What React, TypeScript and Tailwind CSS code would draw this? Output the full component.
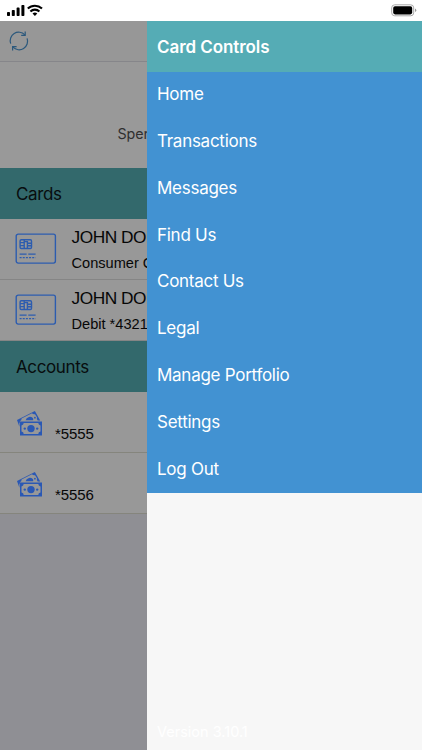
import React from 'react';

const menuItems = [
  'Home',
  'Transactions',
  'Messages',
  'Find Us',
  'Contact Us',
  'Legal',
  'Manage Portfolio',
  'Settings',
  'Log Out',
];

function StatusBar() {
  return (
    <header className="flex h-[21px] shrink-0 items-start justify-between bg-white pl-[7px] pr-[5px] pt-1">
      <div className="flex gap-[2px]">
        <svg width="18" height="12" viewBox="0 0 18 12">
          <rect x="0" y="8" width="3" height="4" rx="0.8" />
          <rect x="4.8" y="6" width="3" height="6" rx="0.8" />
          <rect x="9.6" y="3.6" width="3" height="8.4" rx="0.8" />
          <rect x="14.4" y="1" width="3" height="11" rx="0.8" />
        </svg>
        <svg width="16" height="12" viewBox="0 0 16 12" fill="none" stroke="#000" strokeWidth="2.1">
          <path d="M.8 4.6a10.3 10.3 0 0 1 14.2 0M3.4 7.4a6.5 6.5 0 0 1 9 0" />
          <path d="M5.5 9.6a3.6 3.6 0 0 1 4.8 0L7.9 12z" fill="#000" stroke="none" />
        </svg>
      </div>
      <svg width="26" height="13" viewBox="0 0 26 13">
        <rect x="0.7" y="0.8" width="22" height="11" rx="3" fill="#fff" stroke="#aaa" />
        <rect x="2.2" y="2.2" width="19" height="8.2" rx="1.8" />
        <path d="M24 4.6q1.3.5 1.3 1.7T24 8z" fill="#999" />
      </svg>
    </header>
  );
}

function RefreshIcon() {
  return (
    <svg width="20" height="20" viewBox="0 0 20 20" fill="none" stroke="#2b587c" strokeWidth="1.2">
      <path d="M1.7 12.6A8.5 8.5 0 0 1 15.8 3.8M18.1 7.4A8.5 8.5 0 0 1 4 16.2" />
      <path d="M16.2.6v3.7h-4M3.6 19.4v-3.7h4" />
    </svg>
  );
}

function CardIcon() {
  return (
    <svg className="shrink-0" width="42" height="31" viewBox="0 0 42 31" fill="none" stroke="#2c5caf" strokeWidth="1.4">
      <rect x="1.2" y="1.1" width="39.2" height="29" rx="2" />
      <rect x="5.1" y="6.7" width="11.4" height="8.8" rx="1.2" />
      <path d="M5.1 9.6h4.1M5.1 12.6h4.1M9.2 6.7v8.8M12.4 15.5v-5.3h4.1M12.4 12.8h4.1M12.4 10.2V8.6h-3" />
      <path d="M4.6 21.1h7M13.3 21.1h7.3" />
      <path d="M4.6 24.6h16" strokeDasharray="2 1.15" />
    </svg>
  );
}

function MoneyIcon() {
  return (
    <svg className="shrink-0" width="26" height="25" viewBox="0 0 26 25" fill="#2a58b4">
      <path fillRule="evenodd" d="M0 9 17.9 0l5.3 9.4h-2.4q-1.7-1.4-.7-3L18 3.2q-2 .4-3-1L4.6 7.5q.2 2-1.8 2.7l.6 1.1-1 .4v4z" />
      <path d="M8.6 9.3q.5-2.7 3.4-3.4 3.1-.5 4 1.4.5 1 .1 2z" />
      <circle cx="17.9" cy="6.7" r="0.9" />
      <path fillRule="evenodd" d="M3 10.6h22v13.9H3zM6.7 12.1q0 1.8-2.2 2.3v6.2q2.2.5 2.2 2.4h14.6q0-1.9 2.2-2.4v-6.2q-2.2-.5-2.2-2.3z" />
      <circle cx="14" cy="17.6" r="3.7" />
      <circle cx="7.8" cy="17.6" r="1.2" />
      <circle cx="20.2" cy="17.6" r="1.2" />
    </svg>
  );
}

function SectionTitle({ children }: { children: React.ReactNode }) {
  return (
    <h2 className="flex h-[51px] shrink-0 items-center bg-[#33696c] pl-4 pt-[2px] font-['Inter',sans-serif] text-[17px] tracking-[-0.38px] text-[#080d0e]">
      {children}
    </h2>
  );
}

function CardRow({ detail }: { detail: string }) {
  return (
    <div className="flex h-[61px] shrink-0 border-b border-[#858585] pl-[15px] pt-[14px] font-['Liberation_Sans',Arial,sans-serif] text-[#070707]">
      <CardIcon />
      <div className="-mt-[8px] ml-[14.5px] whitespace-nowrap">
        <div className="text-[17.3px] leading-[24px] tracking-[-0.45px]">JOHN DOE</div>
        <div className="mt-[3px] text-[14.6px] leading-[22px]">{detail}</div>
      </div>
    </div>
  );
}

function AccountRow({ number }: { number: string }) {
  return (
    <div className="flex h-[61px] shrink-0 border-b border-[#85857d] pl-[17px] pt-[19px] font-['Liberation_Sans',Arial,sans-serif] text-[#070707]">
      <MoneyIcon />
      <div className="ml-[12px] mt-[13px] text-[15px] leading-[20px] tracking-[-0.1px]">{number}</div>
    </div>
  );
}

export default function App() {
  return (
    <div className="flex h-[750px] w-[422px] flex-col overflow-hidden bg-white">
      <StatusBar />
      <div className="flex min-h-0 flex-1">
        <main className="flex w-[147px] shrink-0 flex-col overflow-hidden bg-[#8f8f94]">
          <div className="flex h-[41px] shrink-0 items-center border-b border-[#86868a] bg-[#979797] pl-[9px]">
            <RefreshIcon />
          </div>
          <div className="h-[106px] shrink-0 overflow-hidden whitespace-nowrap bg-[#999] pl-[117.5px] pt-[62px] font-['Inter',sans-serif] text-[14.3px] leading-[20px] tracking-[-0.1px] text-[#303030]">
            Spending
          </div>
          <SectionTitle>Cards</SectionTitle>
          <div className="bg-[#989898]">
            <CardRow detail="Consumer Credit" />
            <CardRow detail="Debit *4321" />
          </div>
          <SectionTitle>Accounts</SectionTitle>
          <div className="bg-[#989898]">
            <AccountRow number="*5555" />
            <AccountRow number="*5556" />
          </div>
        </main>
        <aside className="flex min-w-0 flex-1 flex-col bg-[#f7f7f7] font-['Inter',sans-serif] text-white">
          <h1 className="flex h-[50.5px] shrink-0 items-center bg-[#55acb5] pl-[10px] pt-[2px] text-[17px] font-semibold tracking-[-0.07px]">
            Card Controls
          </h1>
          <nav className="shrink-0 bg-[#4292d2]">
            {menuItems.map((item) => (
              <a key={item} className="flex h-[46.83px] items-center pl-[10px] text-[17px] tracking-[-0.27px]">
                {item}
              </a>
            ))}
          </nav>
          <footer className="mt-auto pb-[8px] pl-[10px] text-[14.5px] leading-[20px]">Version 3.10.1</footer>
        </aside>
      </div>
    </div>
  );
}
